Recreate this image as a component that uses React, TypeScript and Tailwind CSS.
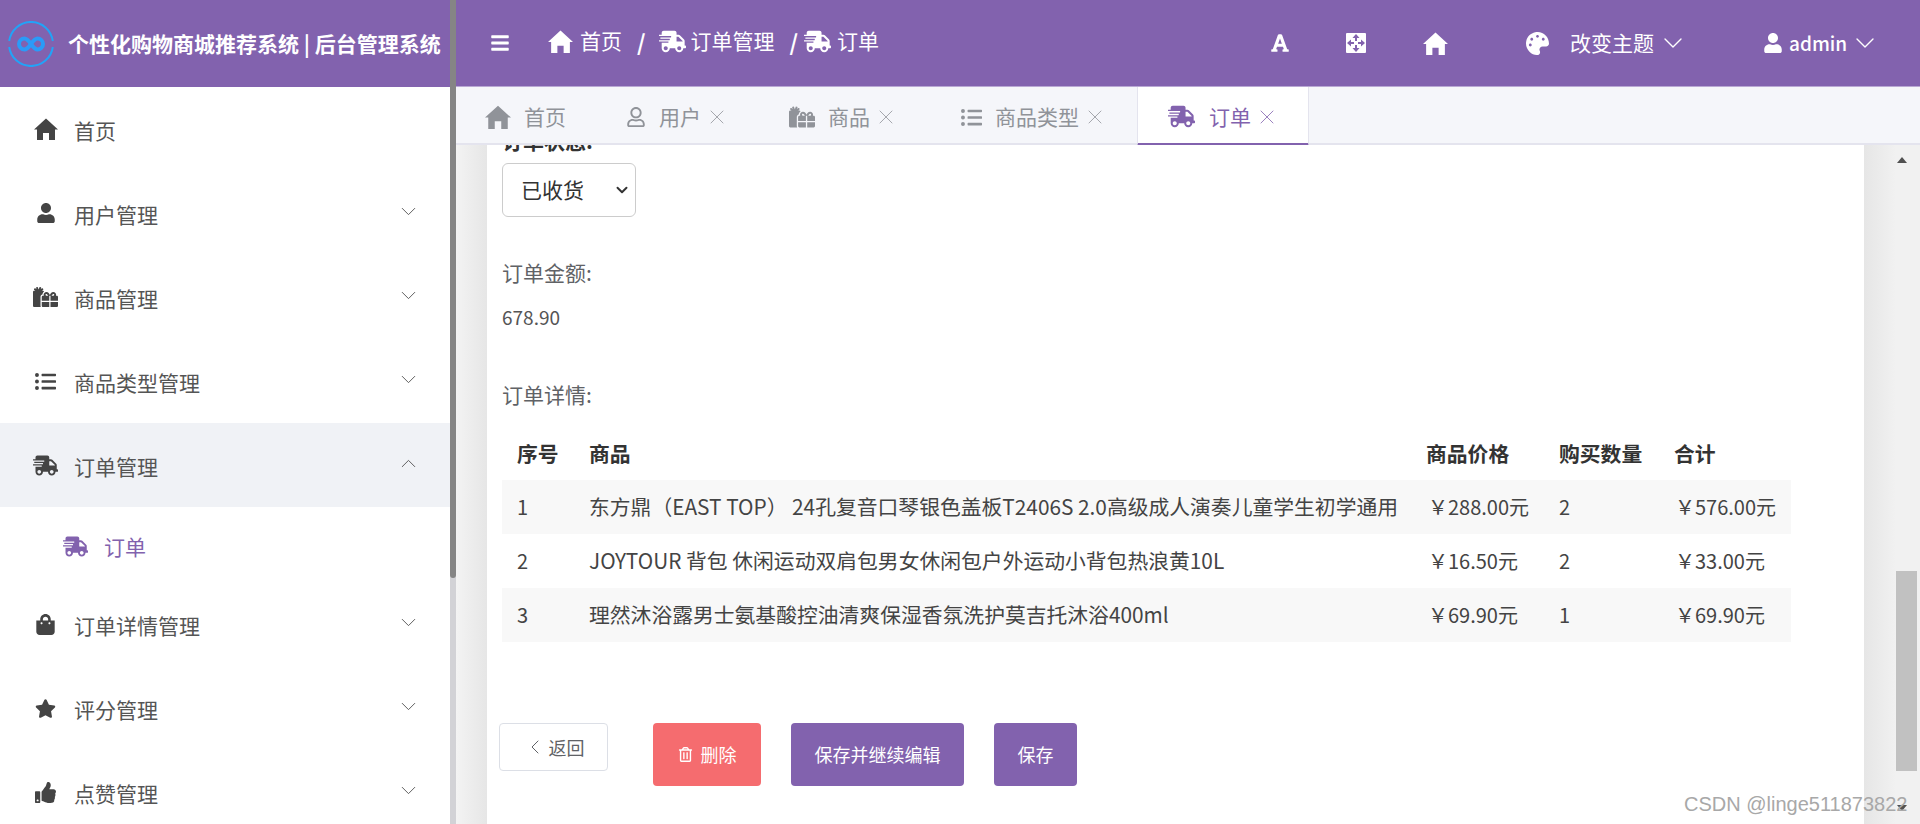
import React from "react";
import { ChevronDown, ChevronLeft, ChevronUp, X } from "lucide-react";
import {
  FaBars,
  FaFont,
  FaGifts,
  FaListUl,
  FaPalette,
  FaRegTrashAlt,
  FaRegUser,
  FaShippingFast,
  FaShoppingBag,
  FaStar,
  FaThumbsUp,
  FaUser,
} from "react-icons/fa";

const font = "font-['Microsoft_YaHei','Noto_Sans_CJK_SC','Noto_Sans',sans-serif]";

// house glyph of the template, no package has this exact shape
const HomeIcon = ({ size = 24, className = "" }: { size?: number; className?: string }) => (
  <svg width={size} height={size} viewBox="0 0 24 24" fill="currentColor" className={`shrink-0 ${className}`}>
    <path d="M12 1.500 24 12.500h-3V23h-6v-7H9v7H3V12.500H0z" />
  </svg>
);

const ExpandIcon = ({ className = "" }: { className?: string }) => (
  <svg width="20" height="20" viewBox="0 0 20 20" className={`shrink-0 ${className}`}>
    <rect width="20" height="20" rx="1" fill="#fff" />
    <path
      d="M10 1 13.500 5H11v3H9V5H6.500zM10 19l3.500-4H11v-3H9v3H6.500zM1 10l4-3.500V9h3v2H5v2.500zM19 10l-4-3.500V9h-3v2h3v2.500z"
      fill="#8262ae"
    />
  </svg>
);

const menus = [
  { label: "首页", icon: HomeIcon, size: 24 },
  { label: "用户管理", icon: FaUser, size: 20, arrow: true },
  { label: "商品管理", icon: FaGifts, size: 26, arrow: true },
  { label: "商品类型管理", icon: FaListUl, size: 21, arrow: true },
  { label: "订单管理", icon: FaShippingFast, size: 25, open: true },
  { label: "订单详情管理", icon: FaShoppingBag, size: 21, arrow: true },
  { label: "评分管理", icon: FaStar, size: 21, arrow: true },
  { label: "点赞管理", icon: FaThumbsUp, size: 21, arrow: true },
];

const tabs = [
  { label: "首页", icon: HomeIcon, size: 26, w: "w-[139px]", pl: "pl-[29px]", noClose: true },
  { label: "用户", icon: FaRegUser, size: 20, w: "w-[163px]", pl: "pl-[31px]" },
  { label: "商品", icon: FaGifts, size: 26, w: "w-[172px]", pl: "pl-[31px]" },
  { label: "商品类型", icon: FaListUl, size: 21, w: "w-[207px]", pl: "pl-[31px]" },
];

const rows = [
  ["1", "东方鼎（EAST TOP） 24孔复音口琴银色盖板T2406S 2.0高级成人演奏儿童学生初学通用", "￥288.00元", "2", "￥576.00元"],
  ["2", "JOYTOUR 背包 休闲运动双肩包男女休闲包户外运动小背包热浪黄10L", "￥16.50元", "2", "￥33.00元"],
  ["3", "理然沐浴露男士氨基酸控油清爽保湿香氛洗护莫吉托沐浴400ml", "￥69.90元", "1", "￥69.90元"],
];

const Logo = () => (
  <svg width="46" height="46" viewBox="0 0 46 46" fill="none" className="shrink-0">
    <path d="M1.200 20A22 22 0 0 1 44.800 20" stroke="#22a3f7" strokeWidth="2" />
    <path d="M44.800 26A22 22 0 0 1 1.200 26" stroke="#22a3f7" strokeWidth="2" />
    <path
      d="M23 23c-2.500-3.500-4.200-5.500-6.500-5.500a5.500 5.500 0 0 0 0 11c2.300 0 4-2 6.500-5.500c2.500-3.500 4.200-5.500 6.500-5.500a5.500 5.500 0 0 1 0 11c-2.300 0-4-2-6.500-5.500z"
      stroke="#2a9bf8"
      strokeWidth="4"
    />
  </svg>
);

const Triangle = ({ down }: { down?: boolean }) => (
  <svg width="12" height="8" viewBox="0 0 12 8" className="shrink-0">
    <path d={down ? "M1 1h10L6 7z" : "M1 7h10L6 1z"} fill="#505050" />
  </svg>
);

const Sidebar = () => (
  <aside className="flex h-full w-[456px] shrink-0">
    <div className="w-[450px] overflow-hidden bg-white">
      <div className="flex h-[87px] items-center gap-[14px] bg-[#8262ae] pl-[8px]">
        <Logo />
        <span className="whitespace-nowrap text-[21px] font-bold text-white">
          个性化购物商城推荐系统 | 后台管理系统
        </span>
      </div>
      {menus.map((m) => (
        <React.Fragment key={m.label}>
          <div
            className={`flex h-[84px] items-center pl-[33px] pr-[29px] ${m.open ? "bg-[#f0f2f6]" : ""}`}
          >
            <span className="flex w-[25px] justify-center text-[#444]">
              <m.icon size={m.size} />
            </span>
            <span className="ml-[16px] pt-[4px] text-[21px] text-[#555]">{m.label}</span>
            {m.arrow && <ChevronDown size={25} strokeWidth={0.9} className="ml-auto -mt-1 text-[#555]" />}
            {m.open && <ChevronUp size={25} strokeWidth={0.9} className="ml-auto -mt-1 text-[#555]" />}
          </div>
          {m.open && (
            <div className="flex h-[75px] items-center pt-[4px] pl-[63px] text-[#8262ae]">
              <FaShippingFast size={25} />
              <span className="ml-[16px] text-[21px]">订单</span>
            </div>
          )}
        </React.Fragment>
      ))}
    </div>
    <div className="flex w-[6px] flex-col bg-[#d2d2d6]">
      <div className="h-[578px] rounded-b-sm bg-[#858585]" />
    </div>
  </aside>
);

const TopBar = () => (
  <header className="flex h-[87px] shrink-0 items-center border-b border-[#b9a8d4] bg-[#8262ae] text-white">
    <FaBars size={20} className="ml-[34px]" />
    <HomeIcon size={25} className="ml-[38px] -mt-[4px]" />
    <span className="ml-[7px] -mt-[4px] text-[21px]">首页</span>
    <span className="ml-[15px] -mt-[4px] text-[22px] font-bold">/</span>
    <FaShippingFast size={27} className="ml-[13px] -mt-[4px]" />
    <span className="ml-[5px] -mt-[4px] text-[21px]">订单管理</span>
    <span className="ml-[15px] -mt-[4px] text-[22px] font-bold">/</span>
    <FaShippingFast size={27} className="ml-[6px] -mt-[4px]" />
    <span className="ml-[6px] -mt-[4px] text-[21px]">订单</span>
    <FaFont size={20} className="ml-[391px]" />
    <ExpandIcon className="ml-[56px]" />
    <HomeIcon size={25} className="ml-[57px]" />
    <FaPalette size={23} className="ml-[78px]" />
    <span className="ml-[21px] text-[21px]">改变主题</span>
    <ChevronDown size={32} strokeWidth={1} className="ml-[3px]" />
    <FaUser size={20} className="ml-[74px]" />
    <span className="ml-[6px] text-[19px] font-medium">admin</span>
    <ChevronDown size={32} strokeWidth={1} className="ml-[2px]" />
  </header>
);

const TabBar = () => (
  <div className="flex h-[58px] shrink-0 border-b-2 border-[#e4e4ee] bg-[#f5f6fa]">
    {tabs.map((t) => (
      <div key={t.label} className={`flex items-center pt-[4px] text-[#909399] ${t.w} ${t.pl}`}>
        <t.icon size={t.size} />
        <span className="ml-[13px] text-[21px]">{t.label}</span>
        {!t.noClose && <X size={24} strokeWidth={0.8} className="ml-[4px]" />}
      </div>
    ))}
    <div className="-mb-[2px] flex h-[60px] w-[172px] items-center border-x border-b-4 border-x-[#e4e4ee] border-b-[#8262ae] bg-white pl-[30px] pt-[3px] text-[#8262ae]">
      <FaShippingFast size={27} />
      <span className="ml-[14px] text-[21px]">订单</span>
      <X size={24} strokeWidth={0.8} className="ml-[4px]" />
    </div>
  </div>
);

const OrderForm = () => (
  <div className="h-full overflow-hidden bg-white pl-[15px] text-[#606266]">
    <label className="-mt-[20px] block text-[21px] font-bold leading-[30px] text-[#333]">订单状态:</label>
    <div className="relative mt-[8px] w-[134px]">
      <select className="block h-[54px] w-full appearance-none rounded-md border border-[#ccc] bg-white pl-[18px] text-[21px] text-[#333]">
        <option>已收货</option>
      </select>
      <ChevronDown size={18} strokeWidth={2.6} className="absolute right-[5px] top-[18px] text-[#333]" />
    </div>
    <div className="mt-[40px] text-[21px] leading-[30px]">订单金额:</div>
    <div className="mt-[15px] text-[19px] leading-[30px] text-[#555]">678.90</div>
    <div className="mt-[47px] text-[21px] leading-[30px]">订单详情:</div>
    <table className="mt-[19px] w-[1289px] table-fixed text-left text-[20px] text-[#444]">
      <colgroup>
        <col className="w-[87px]" />
        <col className="w-[824px]" />
        <col className="w-[133px]" />
        <col className="w-[115px]" />
        <col className="w-[130px]" />
      </colgroup>
      <thead>
        <tr className="h-[52px] text-[20.800px] font-bold text-[#333]">
          <th className="pl-[15px]">序号</th>
          <th>商品</th>
          <th className="pl-[13px]">商品价格</th>
          <th className="pl-[13px]">购买数量</th>
          <th className="pl-[13px]">合计</th>
        </tr>
      </thead>
      <tbody>
        {rows.map((r, i) => (
          <tr key={r[0]} className={`h-[54px] ${i % 2 === 0 ? "bg-[#f8f8f8]" : "bg-white"}`}>
            <td className="pl-[15px]">{r[0]}</td>
            <td className="whitespace-nowrap text-[20.800px]">{r[1]}</td>
            <td className="whitespace-nowrap pl-[15px]">{r[2]}</td>
            <td className="pl-[13px]">{r[3]}</td>
            <td className="whitespace-nowrap pl-[14px]">{r[4]}</td>
          </tr>
        ))}
      </tbody>
    </table>
    <div className="-ml-[3px] mt-[81px] flex items-start">
      <button className="flex h-[48px] w-[109px] items-center justify-center rounded-[4px] border border-[#dcdfe6] bg-white text-[18px] text-[#606266]">
        <ChevronLeft size={24} strokeWidth={1} className="mr-[2px]" />
        返回
      </button>
      <button className="ml-[45px] flex h-[63px] w-[108px] items-center justify-center rounded-[4px] bg-[#f56c6f] text-[18px] text-white">
        <FaRegTrashAlt size={15} className="mr-[8px]" />
        删除
      </button>
      <button className="ml-[30px] h-[63px] w-[173px] rounded-[4px] bg-[#8262ae] text-[18px] text-white">
        保存并继续编辑
      </button>
      <button className="ml-[30px] h-[63px] w-[83px] rounded-[4px] bg-[#8262ae] text-[18px] text-white">保存</button>
    </div>
  </div>
);

const ContentArea = () => (
  <div className="flex min-h-0 flex-1">
    <div className="w-[31px] shrink-0 bg-gradient-to-r from-[#f3f3f3] to-[#e6e6e6]" />
    <div className="w-[1377px] shrink-0">
      <OrderForm />
    </div>
    <div className="w-[32px] shrink-0 bg-gradient-to-r from-[#e6e6e6] to-[#f1f1f1]" />
    <div className="flex w-[24px] flex-col items-start bg-[#f1f1f1] pt-[11px]">
      <Triangle />
      <div className="mt-[407px] h-[200px] w-[21px] shrink-0 bg-[#c1c1c1]" />
      <div className="mt-[33px]">
        <Triangle down />
      </div>
    </div>
  </div>
);

export default function App() {
  return (
    <div className={`relative flex h-[824px] w-[1920px] overflow-hidden bg-white ${font}`}>
      <Sidebar />
      <main className="flex min-w-0 flex-1 flex-col">
        <TopBar />
        <TabBar />
        <ContentArea />
      </main>
      <span className="absolute left-[1684px] top-[789px] whitespace-nowrap font-['Liberation_Sans',sans-serif] text-[20px] text-[#a8a8a8]">
        CSDN @linge511873822
      </span>
    </div>
  );
}
